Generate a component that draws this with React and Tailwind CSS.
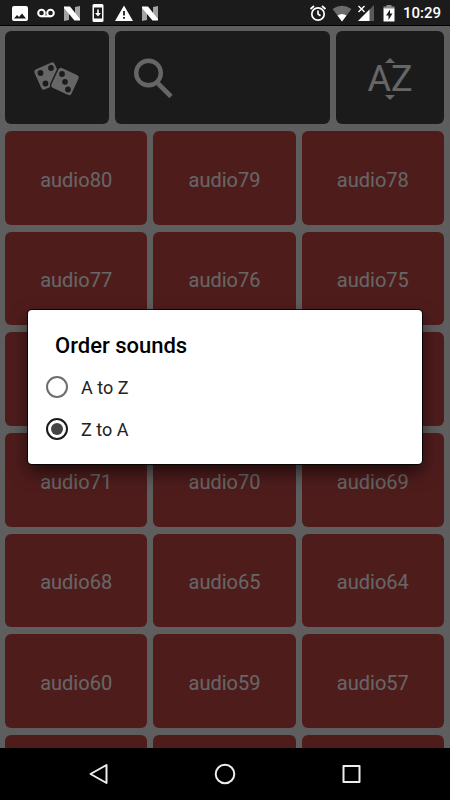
import React, { useState } from 'react';

const sounds = [80, 79, 78, 77, 76, 75, 74, 73, 72, 71, 70, 69, 68, 65, 64, 60, 59, 57, 56, 55, 54];

const NougatIcon = () => (
  <svg viewBox="0 0 18 18" className="size-[18px]">
    <path d="M1 3l5 3v10l-5 1z" fill="#a3a3a3" />
    <path d="M12 3l5-1v14l-5-3z" fill="#a3a3a3" />
    <path d="M1 2.500h6L17 15v1.500h-5.500L1 4z" fill="#fff" />
  </svg>
);

const StatusBar = () => (
  <header className="flex h-[26px] shrink-0 items-center justify-between border-b border-black bg-[#1b1b1b] pr-[9px] pl-[11px] text-white">
    <div className="flex items-center gap-2">
      {/* Image */}
      <svg viewBox="0 0 18 18" className="size-[18px]" fill="currentColor">
        <path
          fillRule="evenodd"
          d="M3 2h12a2 2 0 0 1 2 2v11a2 2 0 0 1-2 2H3a2 2 0 0 1-2-2V4a2 2 0 0 1 2-2zM3 14.500h12l-4-5-3 3.500-2-2z"
        />
      </svg>
      {/* Voicemail */}
      <svg viewBox="0 0 18 18" className="size-[18px]" fill="none" stroke="currentColor" strokeWidth="2">
        <circle cx="4.500" cy="9" r="3.300" />
        <circle cx="13.500" cy="9" r="3.300" />
        <path d="M4.500 12.300h9" />
      </svg>
      <NougatIcon />
      {/* Download to device */}
      <svg viewBox="0 0 18 18" className="size-[18px]" fill="currentColor">
        <path
          fillRule="evenodd"
          d="M5 0h8a1.500 1.500 0 0 1 1.500 1.500v15A1.500 1.500 0 0 1 13 18H5a1.500 1.500 0 0 1-1.500-1.500v-15A1.500 1.500 0 0 1 5 0zM5 3.500v11h8v-11z"
        />
        <path d="M8.200 5.500h1.600V9H12l-3 3.500L6 9h2.200z" />
      </svg>
      {/* Warning */}
      <svg viewBox="0 0 18 18" className="size-[18px]" fill="currentColor">
        <path fillRule="evenodd" d="M9 1.500L18 17H0zM8.100 7v4.500h1.800V7zM8.100 13v1.800h1.800V13z" />
      </svg>
      <NougatIcon />
    </div>

    <div className="flex items-center gap-[5px]">
      {/* Alarm */}
      <svg viewBox="0 0 18 18" className="size-[18px]" fill="none" stroke="currentColor" strokeWidth="1.700">
        <circle cx="9" cy="10" r="6.200" />
        <path d="M9 6.500V10l2.500 1.800M1.500 5L5 2M16.500 5L13 2" />
      </svg>
      {/* Wifi */}
      <svg viewBox="0 0 20 18" className="h-[18px] w-5">
        <path d="M.5 5Q10-1.500 19.500 5L10 17.500z" fill="#6b6b6b" />
        <path d="M5.500 11.500Q10 8.500 14.500 11.500L10 17.500z" fill="#fff" />
      </svg>
      {/* Signal */}
      <svg viewBox="0 0 18 18" className="size-[18px]">
        <path d="M17 1v16H1z" fill="#5a5a5a" />
        <path d="M12.500 5.500V17H1z" fill="#fff" />
        <path d="M1.500 2l6 6M7.500 2l-6 6" stroke="#fff" strokeWidth="1.400" />
      </svg>
      {/* Battery */}
      <svg viewBox="0 0 18 18" className="size-[18px]">
        <path d="M3.500 2.500h3V1h5v1.500h3V5h-11z" fill="#8c8c8c" />
        <path d="M3.500 4.500h11v13h-11z" fill="#fff" />
        <path d="M10 5.500L6 11.500h2.500V16l4-6.500H10z" fill="#1b1b1b" />
      </svg>
      <span className="pt-0.5 text-[15px] leading-none font-medium">10:29</span>
    </div>
  </header>
);

const DiceIcon = () => (
  <svg viewBox="0 0 48 38" className="h-[38px] w-12" fill="currentColor">
    <rect x="4" y="5" width="22" height="22" rx="3" transform="rotate(-24 15 16)" />
    <rect x="21" y="10.500" width="22" height="22" rx="3" transform="rotate(25 32 21.500)" stroke="#444" strokeWidth="3" paintOrder="stroke" />
    <g fill="#444">
      <circle cx="7.500" cy="13" r="2.900" />
      <circle cx="18" cy="8" r="2.900" />
      <circle cx="12.500" cy="23.500" r="2.900" />
      <circle cx="29" cy="14" r="2.900" />
      <circle cx="32" cy="21.800" r="2.900" />
      <circle cx="35" cy="29.500" r="2.900" />
    </g>
  </svg>
);

const SearchIcon = () => (
  <svg viewBox="0 0 40 40" className="size-10 shrink-0" fill="none" stroke="currentColor">
    <circle cx="15.500" cy="15" r="12.300" strokeWidth="4.400" />
    <path d="M25 25.500L38 38.500" strokeWidth="4.600" />
  </svg>
);

const NavBar = () => (
  <nav className="flex h-[52px] shrink-0 items-center bg-black px-9 text-[#ededed]">
    <button type="button" aria-label="Back" className="flex flex-1 justify-center">
      <svg viewBox="0 0 22 22" className="size-[22px]" fill="none" stroke="currentColor" strokeWidth="2" strokeLinejoin="round">
        <path d="M18.500 2v18L2.500 11z" />
      </svg>
    </button>
    <button type="button" aria-label="Home" className="flex flex-1 justify-center">
      <svg viewBox="0 0 22 22" className="size-[22px]" fill="none" stroke="currentColor" strokeWidth="2">
        <circle cx="11" cy="11" r="9.300" />
      </svg>
    </button>
    <button type="button" aria-label="Recents" className="flex flex-1 justify-center">
      <svg viewBox="0 0 22 22" className="size-[22px]" fill="none" stroke="currentColor" strokeWidth="2" strokeLinejoin="round">
        <path d="M3.500 3h16v16h-16z" />
      </svg>
    </button>
  </nav>
);

const OrderOption = ({ value, label, order, onChange }) => (
  <label className="flex h-[42px] items-center gap-[13px] text-lg text-[#222]">
    <input
      type="radio"
      name="order"
      value={value}
      checked={order === value}
      onChange={() => onChange(value)}
      className="grid size-[22px] appearance-none place-items-center rounded-full border-2 border-[#6e6e6e] before:size-3 before:rounded-full checked:border-[#1a1a1a] checked:before:bg-[#444]"
    />
    <span className="pt-0.5">{label}</span>
  </label>
);

const App = () => {
  const [order, setOrder] = useState('desc');
  const [search, setSearch] = useState('');

  return (
    <div className="flex h-screen flex-col overflow-hidden font-[Roboto,sans-serif]">
      <StatusBar />

      <main className="relative min-h-0 flex-1 overflow-hidden bg-[#ebebeb] pt-[5px] pr-1.5 pl-[5px]">
        {/* Toolbar */}
        <div className="mb-[7px] grid grid-cols-[minmax(0,104fr)_minmax(0,215fr)_minmax(0,108fr)] gap-1.5 text-white">
          <button type="button" aria-label="Random sound" className="flex h-[93px] items-center justify-center rounded-md bg-[#444] pt-0.5">
            <DiceIcon />
          </button>
          <label className="flex h-[93px] items-center rounded-md bg-[#444] pr-3 pl-[18px]">
            <SearchIcon />
            <input
              type="text"
              aria-label="Search"
              value={search}
              onChange={(e) => setSearch(e.target.value)}
              className="ml-2 w-full min-w-0 bg-transparent text-xl outline-none"
            />
          </label>
          <button type="button" aria-label="Order sounds" className="flex h-[93px] flex-col items-center justify-center rounded-md bg-[#444] pt-0.5">
            <svg viewBox="0 0 10 5" className="h-[5px] w-2.5" fill="currentColor">
              <path d="M5 0l5 5H0z" />
            </svg>
            <span className="text-4xl leading-8">AZ</span>
            <svg viewBox="0 0 10 5" className="h-[5px] w-2.5" fill="currentColor">
              <path d="M0 0h10L5 5z" />
            </svg>
          </button>
        </div>

        {/* Sounds */}
        <div className="grid grid-cols-3 gap-x-1.5 gap-y-[7px]">
          {sounds.map((n) => (
            <button key={n} type="button" className="aspect-[38/25] rounded-md bg-[#c54646] pt-1 text-xl text-white">
              audio{n}
            </button>
          ))}
        </div>

        {/* Order dialog */}
        <div className="absolute inset-0 flex items-center bg-black/60 px-7">
          <div role="dialog" aria-labelledby="order-title" className="w-full rounded-sm bg-white pt-[21px] pb-3.5 shadow-[0_8px_18px_rgba(0,0,0,0.6)] ring-1 ring-black/80">
            <h2 id="order-title" className="mb-[5px] pl-[27px] text-[22px] leading-[30px] font-medium text-black">
              Order sounds
            </h2>
            <div className="pl-[18px]">
              <OrderOption value="asc" label="A to Z" order={order} onChange={setOrder} />
              <OrderOption value="desc" label="Z to A" order={order} onChange={setOrder} />
            </div>
          </div>
        </div>
      </main>

      <NavBar />
    </div>
  );
};

export default App;
